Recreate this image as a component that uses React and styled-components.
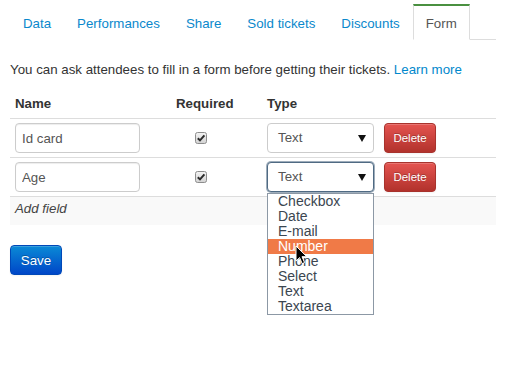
import React from 'react'
import styled, { createGlobalStyle } from 'styled-components'

const GlobalStyle = createGlobalStyle`
  html, body, #root {
    min-height: 100%;
  }
  html {
    height: 100%;
  }
  body {
    margin: 0;
    background: #fff;
    font-family: "Liberation Sans", Arial, sans-serif;
    font-size: 13.3px;
    line-height: 20px;
    color: #333;
  }
`

const Page = styled.div`
  box-sizing: border-box;
  min-height: 365px;
  padding: 4px 19px 0 10px;
`

const Tabs = styled.ul`
  display: flex;
  list-style: none;
  margin: 0 0 20px;
  padding: 0;
  border-bottom: 1px solid #ddd;
`

const Tab = styled.li`
  margin-bottom: -1px;
  padding: 8px 12px 5px;
  border: 1px solid ${p => (p.$active ? '#ddd' : 'transparent')};
  border-top: 2px solid ${p => (p.$active ? '#4a9040' : 'transparent')};
  border-bottom-color: ${p => (p.$active ? '#fff' : 'transparent')};
  background: #fff;
  color: ${p => (p.$active ? '#555' : '#0a88cc')};
  cursor: pointer;
`

const Intro = styled.p`
  margin: 0 0 10px;
`

const Link = styled.a`
  color: #0088cc;
  text-decoration: none;
`

const Table = styled.table`
  width: 100%;
  border-collapse: collapse;
  table-layout: fixed;
  margin-bottom: 20px;
`

const Th = styled.th`
  text-align: left;
  padding: 4px 5px;
  font-weight: bold;
  border-bottom: 1px solid #ddd;
`

const Td = styled.td`
  padding: 4px 5px;
  border-bottom: 1px solid #ddd;
  vertical-align: middle;
  padding-left: ${p => p.$indent || 5}px;
`

const FootCell = styled.td`
  padding: 2px 5px 6px;
  background: #f9f9f9;
  font-style: italic;
  color: #444;
`

const TextInput = styled.input`
  box-sizing: border-box;
  width: 125px;
  height: 30px;
  padding: 4px 6px;
  border: 1px solid #ccc;
  border-radius: 4px;
  box-shadow: inset 0 1px 1px rgba(0, 0, 0, 0.075);
  font: inherit;
  color: #555;
  outline: none;
`

const Check = styled.span`
  display: inline-flex;
  vertical-align: middle;
`

const SelectWrap = styled.div`
  position: relative;
  width: 107px;
`

const SelectBox = styled.div`
  box-sizing: border-box;
  height: 30px;
  display: flex;
  align-items: center;
  justify-content: space-between;
  padding: 0 7px 0 10px;
  background: #fff;
  border: 1px solid ${p => (p.$focused ? '#4f6a83' : '#ccc')};
  box-shadow: ${p => (p.$focused ? '0 0 0 1px rgba(79,106,131,0.55)' : 'none')};
  border-radius: 4px;
  color: #555;
`

const Caret = styled.span`
  width: 0;
  height: 0;
  border-left: 4px solid transparent;
  border-right: 4px solid transparent;
  border-top: 7px solid #111;
`

const DropList = styled.ul`
  position: absolute;
  top: 31px;
  left: 0;
  right: 0;
  z-index: 5;
  margin: 0;
  padding: 0;
  list-style: none;
  background: #fff;
  border: 1px solid #8c98a5;
`

const Option = styled.li`
  height: 15px;
  line-height: 15px;
  padding-left: 10px;
  font-size: 14px;
  color: ${p => (p.$active ? '#fff' : '#3b4650')};
  background: ${p => (p.$active ? '#f07a47' : 'transparent')};
`

const Pointer = styled.svg`
  position: absolute;
  left: 28px;
  top: 83px;
  z-index: 6;
`

const Button = styled.button`
  box-sizing: border-box;
  height: 30px;
  border-radius: 4px;
  color: #fff;
  cursor: pointer;
  font-family: inherit;
  text-shadow: 0 -1px 0 rgba(0, 0, 0, 0.25);
  box-shadow: inset 0 1px 0 rgba(255, 255, 255, 0.2), 0 1px 2px rgba(0, 0, 0, 0.05);
`

const DangerButton = styled(Button)`
  width: 52px;
  padding: 0;
  font-size: 11.5px;
  border: 1px solid #a8332d;
  background: linear-gradient(to bottom, #e45450, #b2322c);
`

const PrimaryButton = styled(Button)`
  width: 52px;
  padding: 0;
  font-size: 13.3px;
  border: 1px solid #0048b8;
  background: linear-gradient(to bottom, #0a8ad6, #0046c8);
`

const CheckIcon = () => (
  <svg width="12" height="12" viewBox="0 0 12 12">
    <defs>
      <linearGradient id="cbg" x1="0" y1="0" x2="0" y2="1">
        <stop offset="0" stopColor="#f4f4f4" />
        <stop offset="1" stopColor="#d2d2d2" />
      </linearGradient>
    </defs>
    <rect x="0.5" y="0.5" width="11" height="11" rx="2" fill="url(#cbg)" stroke="#8d8d8d" />
    <path d="M2.8 6.2 L5 8.4 L9.4 3.4" fill="none" stroke="#2b2b2b" strokeWidth="2" />
  </svg>
)

const tabs = ['Data', 'Performances', 'Share', 'Sold tickets', 'Discounts', 'Form']
const options = ['Checkbox', 'Date', 'E-mail', 'Number', 'Phone', 'Select', 'Text', 'Textarea']
const fields = [
  { name: 'Id card', type: 'Text', open: false },
  { name: 'Age', type: 'Text', open: true },
]

export default function App() {
  return (
    <Page>
      <GlobalStyle />
      <Tabs>
        {tabs.map(t => (
          <Tab key={t} $active={t === 'Form'}>{t}</Tab>
        ))}
      </Tabs>
      <Intro>
        You can ask attendees to fill in a form before getting their tickets. <Link href="#">Learn more</Link>
      </Intro>
      <Table>
        <colgroup>
          <col style={{ width: 161 }} />
          <col style={{ width: 91 }} />
          <col style={{ width: 117 }} />
          <col />
        </colgroup>
        <thead>
          <tr>
            <Th>Name</Th>
            <Th>Required</Th>
            <Th>Type</Th>
            <Th />
          </tr>
        </thead>
        <tbody>
          {fields.map(f => (
            <tr key={f.name}>
              <Td><TextInput defaultValue={f.name} /></Td>
              <Td $indent={24}><Check><CheckIcon /></Check></Td>
              <Td>
                <SelectWrap>
                  <SelectBox $focused={f.open}>
                    {f.type}
                    <Caret />
                  </SelectBox>
                  {f.open && (
                    <>
                      <DropList>
                        {options.map(o => (
                          <Option key={o} $active={o === 'Number'}>{o}</Option>
                        ))}
                      </DropList>
                      <Pointer width="13" height="20" viewBox="0 0 13 20">
                        <path d="M1 1 L1 16 L4.6 12.6 L7.2 18.6 L9.6 17.6 L7 11.7 L11.8 11.7 Z" fill="#000" stroke="#fff" strokeWidth="1" strokeLinejoin="round" />
                      </Pointer>
                    </>
                  )}
                </SelectWrap>
              </Td>
              <Td><DangerButton>Delete</DangerButton></Td>
            </tr>
          ))}
          <tr>
            <FootCell colSpan={4}>Add field</FootCell>
          </tr>
        </tbody>
      </Table>
      <PrimaryButton>Save</PrimaryButton>
    </Page>
  )
}
